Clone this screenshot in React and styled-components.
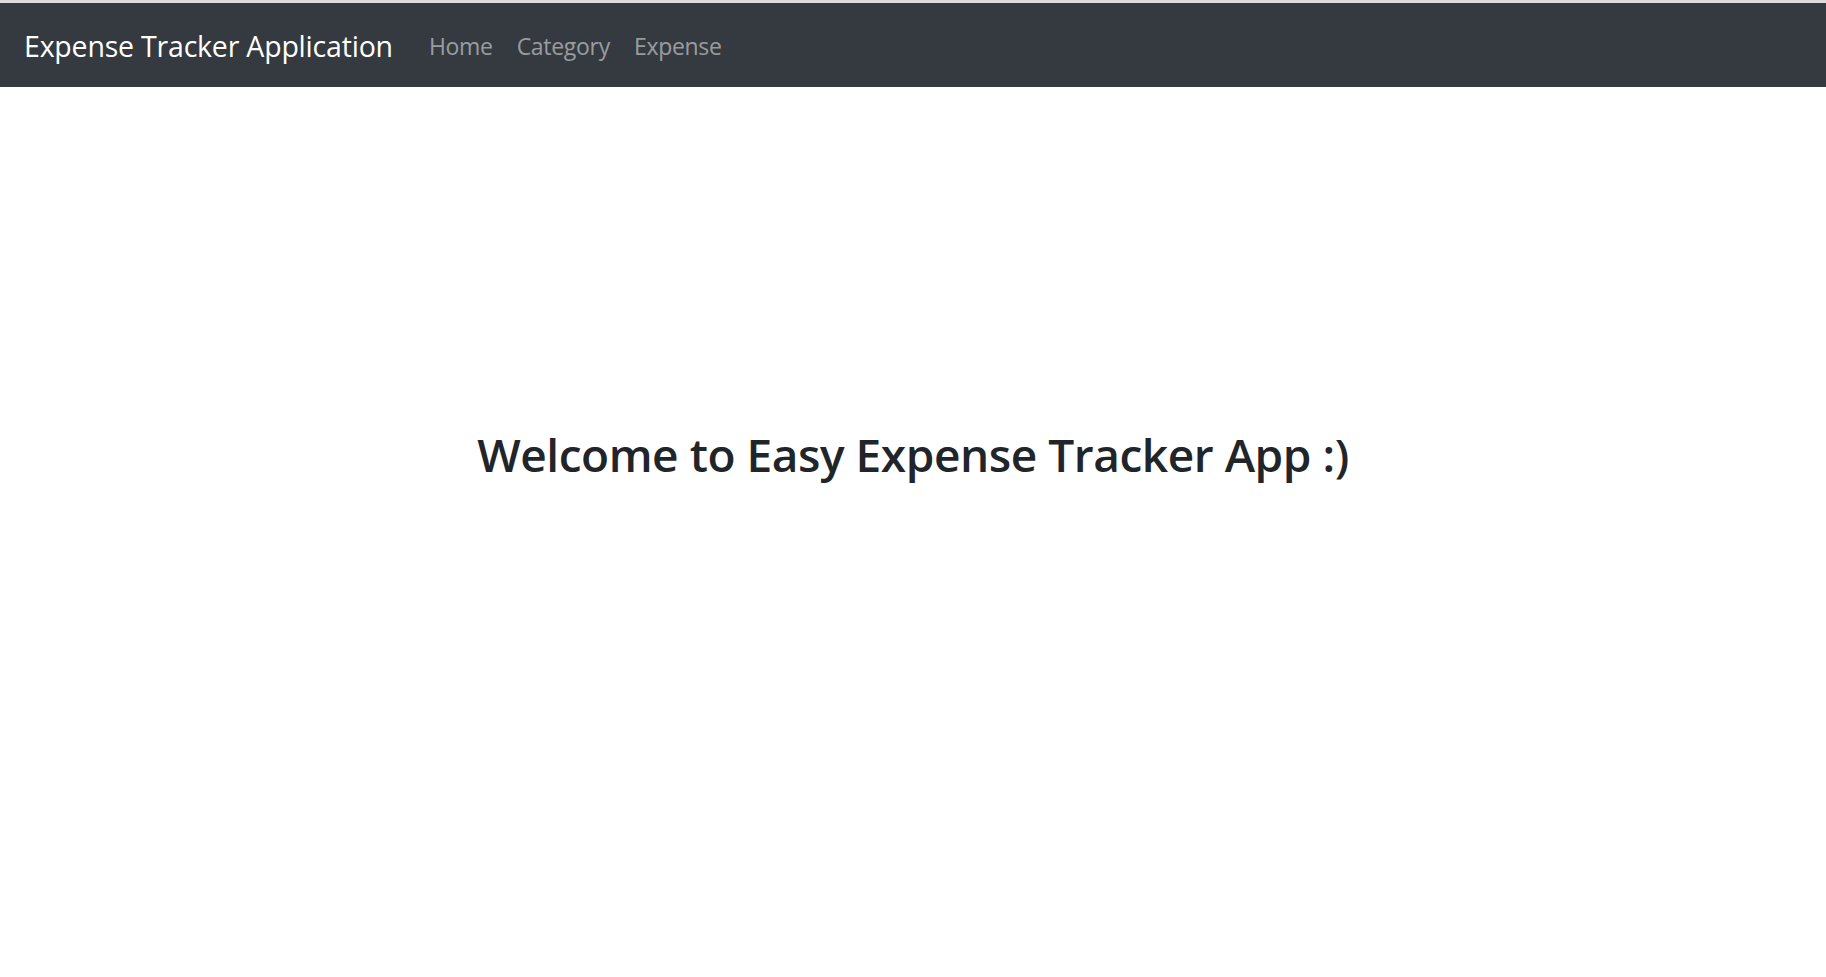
import React from 'react';
import styled, { createGlobalStyle } from 'styled-components';

const GlobalStyle = createGlobalStyle`
    html, body {
        margin: 0;
        padding: 0;
        background: #fff;
    }
    body {
        font-family: "Open Sans", "Noto Sans", "Liberation Sans", sans-serif;
        color: #212529;
        border-top: 3px solid #dcdcdc;
    }
`;

const NavbarStyle = styled.nav`
    display: flex;
    align-items: center;
    height: 84px;
    padding: 1px 24px 0;
    background: #343a40;
    box-sizing: border-box;
`;

const Brand = styled.a`
    color: #fff;
    font-size: 28.5px;
    letter-spacing: -0.2px;
    text-decoration: none;
    margin-right: 24px;
    white-space: nowrap;
`;

const NavLinks = styled.div`
    display: flex;
    align-items: center;
`;

const NavLink = styled.a`
    color: rgba(255, 255, 255, 0.5);
    font-size: 23px;
    letter-spacing: -0.3px;
    text-decoration: none;
    padding: 0 12px;
`;

const Main = styled.main`
    display: flex;
    justify-content: center;
    padding-top: 336px;
`;

const Heading = styled.h1`
    margin: 0;
    font-size: 46px;
    font-weight: 600;
    letter-spacing: -0.45px;
    color: #212529;
`;

const App = () => {
    return (
        <>
            <GlobalStyle />
            <NavbarStyle>
                <Brand href="#">Expense Tracker Application</Brand>
                <NavLinks>
                    <NavLink href="#">Home</NavLink>
                    <NavLink href="#">Category</NavLink>
                    <NavLink href="#">Expense</NavLink>
                </NavLinks>
            </NavbarStyle>
            <Main>
                <Heading>Welcome to Easy Expense Tracker App :)</Heading>
            </Main>
        </>
    );
};

export default App;
